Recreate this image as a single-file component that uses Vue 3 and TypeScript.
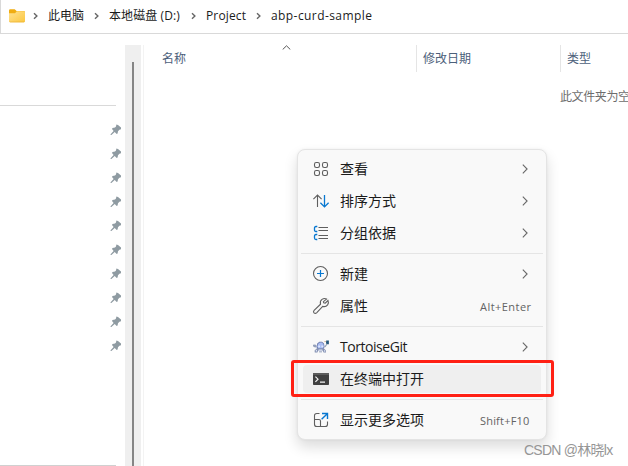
<script setup lang="ts">
interface Crumb { label: string; cls: string }
interface MenuItem { id: string; label: string; shortcut?: string; active?: boolean }

const crumbs: Crumb[] = [
  { label: '此电脑', cls: 'pc' },
  { label: '本地磁盘 (D:)', cls: 'disk' },
  { label: 'Project', cls: 'project' },
  { label: 'abp-curd-sample', cls: 'sample' },
]

const groups: MenuItem[][] = [
  [
    { id: 'view', label: '查看' },
    { id: 'sort', label: '排序方式' },
    { id: 'group', label: '分组依据' },
  ],
  [
    { id: 'new', label: '新建' },
    { id: 'props', label: '属性', shortcut: 'Alt+Enter' },
  ],
  [
    { id: 'git', label: 'TortoiseGit' },
    { id: 'terminal', label: '在终端中打开', active: true },
  ],
  [{ id: 'more', label: '显示更多选项', shortcut: 'Shift+F10' }],
]
</script>

<template>
  <div class="explorer">
    <header class="address">
      <svg class="folder" width="16" height="14" viewBox="0 0 16 14">
        <defs>
          <linearGradient id="folderFill" x1="0" y1="0" x2="1" y2="1">
            <stop offset="0" stop-color="#ffe292" />
            <stop offset="1" stop-color="#fbc740" />
          </linearGradient>
        </defs>
        <path d="M0 1.5Q0 .3 1.2.3H5.7L7.6 2H14.8Q16 2 16 3.2V9H0Z" fill="#f0ad12" />
        <path d="M0 4.2H6L7.8 2.2H14.8Q16 2.2 16 3.4V12Q16 13.2 14.8 13.2H1.2Q0 13.2 0 12Z" fill="url(#folderFill)" />
        <path d="M.5 12.6Q.8 13 1.3 13H14.7Q15.2 13 15.5 12.6" fill="none" stroke="#e9ac27" stroke-width=".6" />
      </svg>
      <template v-for="c in crumbs" :key="c.label">
        <svg class="crumb-arrow" width="5" height="8" viewBox="0 0 5 8">
          <path d="M1 1.2L3.9 4L1 6.8" fill="none" stroke="#666" stroke-width="1.4" />
        </svg>
        <span class="crumb" :class="c.cls">{{ c.label }}</span>
      </template>
    </header>

    <div class="body">
      <nav class="sidebar">
        <div class="pins">
          <svg v-for="n in 10" :key="n" class="pin" width="12" height="12" viewBox="0 0 12 12">
            <path d="M6.4.6L8 .9L11 3.6V5.2L9.4 5.8L8 7.2L7.6 9.6L6.7 9.9L4.7 8L1.4 11H.6V10.2L3.6 7L2 5L2.5 4.1L5 3.6L6 2.4Z" fill="#8f9ba2" />
          </svg>
        </div>
      </nav>
      <div class="scrollbar"><div class="thumb"></div></div>
      <main class="content">
        <div class="columns">
          <div class="column name">
            <span>名称</span>
            <svg class="sort-mark" width="9" height="5" viewBox="0 0 9 5">
              <path d="M.7 4.5L4.5.8L8.3 4.5" fill="none" stroke="#555" />
            </svg>
          </div>
          <div class="column date">修改日期</div>
          <div class="column type">类型</div>
        </div>
        <p class="empty">此文件夹为空</p>
      </main>
    </div>

    <div class="menu">
      <div v-for="(g, i) in groups" :key="i" class="group">
        <div v-for="item in g" :key="item.id" class="item" :class="{ active: item.active }">
          <svg class="icon" width="16" height="16" viewBox="0 0 16 16" fill="none" stroke="#5f5f5f" stroke-width="1.1">
            <g v-if="item.id === 'view'">
              <rect x="1.5" y="1.5" width="5" height="5" rx="1.7" />
              <rect x="9.5" y="1.5" width="5" height="5" rx="1.7" />
              <rect x="1.5" y="9.5" width="5" height="5" rx="1.7" />
              <rect x="9.5" y="9.5" width="5" height="5" rx="1.7" />
            </g>
            <g v-else-if="item.id === 'sort'">
              <path d="M4.5 14V2.3M.4 6.2L4.5 2.1L8.6 6.2" />
              <path d="M11.5 2V13.7M7.4 9.8L11.5 13.9L15.6 9.8" stroke="#0878d1" stroke-width="1.3" />
            </g>
            <g v-else-if="item.id === 'group'">
              <path d="M5.5 2.5H15M5.5 5.5H15M5.5 10.5H15M5.5 13.5H15" />
              <path d="M4.3 1.5H3Q1.5 1.5 1.5 3V5Q1.5 6.5 3 6.5H4.3M4.3 9.5H3Q1.5 9.5 1.5 11V13Q1.5 14.5 3 14.5H4.3" stroke="#0878d1" stroke-width="1.3" />
            </g>
            <g v-else-if="item.id === 'new'">
              <circle cx="7.5" cy="7.5" r="7" />
              <path d="M7.5 4V11M4 7.5H11" stroke="#0878d1" stroke-width="1.2" />
            </g>
            <g v-else-if="item.id === 'props'">
              <path d="M13.5 1.1Q11.3-.1 9 1.4Q6.7 3.1 7.5 6.2L1.1 12.3Q-.1 13.6 1 14.9Q2.3 16 3.6 14.8L9.7 8.4Q12.7 9.3 14.6 6.9Q16 4.7 15 2.5L12.2 5.2L10.7 4.9L10.4 3.6Z" />
            </g>
            <g v-else-if="item.id === 'git'" stroke="none">
              <path d="M3.6 8L4.2 4.6L6.4 2.8H9L11 4.6L11.6 8L10.4 10.2H4.4Z" fill="#6d7cab" />
              <path d="M4.4 7.4L5 5L6.8 3.6H8.8L10.4 5L10.8 7.8L9.6 9.4H5.4Z" fill="#a9bdf3" />
              <path d="M5.2 6.4H7V8.2H5.2ZM8.4 6.4H10.2V8.2H8.4Z" fill="#dfe7fb" />
              <path d="M0 5.8L2.2 5.4L3.6 6.6V8.4L1.4 8.2L0 7.2Z" fill="#94a0bb" />
              <path d="M3.6 9.4L1.6 11.4L1.8 13.4H4.4L5.2 11.6H9.6L10.6 13.6H13L12.8 11.2L11 9.4Z" fill="#8491b2" />
              <path d="M2.6 11.6L4 10.6V12.6H2.8ZM11 10.6L12.2 11.8V12.8H11.2ZM5.6 10.4H9.4V11.4H5.6Z" fill="#dce4f6" />
              <path d="M6 12.2H9V13.4H6Z" fill="#a4afc8" />
              <path d="M13.2 1.6H15.9V5.2H14.4L13 4.4Z" fill="#255779" />
              <path d="M14 5L11.8 8" stroke="#8c9aae" />
              <path d="M11.6 2H12.6V3H11.6Z" fill="#c39469" />
            </g>
            <g v-else-if="item.id === 'terminal'" stroke="none">
              <rect y="2" width="16" height="12" rx=".8" fill="#404040" />
              <path d="M0 2.8Q0 2 .8 2H15.2Q16 2 16 2.8V4H0Z" fill="#5c5c5c" />
              <path d="M2.4 5.6L5 8.2L2.4 10.8M7 11.2H12" fill="none" stroke="#f4f4f4" stroke-width="1.2" />
            </g>
            <g v-else>
              <path d="M6.5 1.5H3.8Q1.5 1.5 1.5 3.8V12.2Q1.5 14.5 3.8 14.5H12.2Q14.5 14.5 14.5 12.2V9.5M1.5 7.5H6Q7.5 7.5 7.5 9V14.5" />
              <path d="M9 1.5H14.5V7M14.3 1.7L8.6 7.2" stroke="#0878d1" stroke-width="1.4" />
            </g>
          </svg>
          <span class="label" :class="item.id">{{ item.label }}</span>
          <span v-if="item.shortcut" class="shortcut" :class="item.id">{{ item.shortcut }}</span>
          <svg v-else-if="!item.active" class="arrow" width="6" height="10" viewBox="0 0 6 10">
            <path d="M.8.6L5.1 5L.8 9.4" fill="none" stroke="#686868" stroke-width="1.1" />
          </svg>
        </div>
      </div>
    </div>
    <div class="highlight"></div>
    <div class="watermark">CSDN @林晓lx</div>
  </div>
</template>

<style>
body { margin: 0; overflow: hidden; }
</style>

<style scoped>
* { box-sizing: border-box; }
.explorer {
  position: relative;
  width: 628px;
  height: 466px;
  overflow: hidden;
  background: #fff;
  display: flex;
  flex-direction: column;
  font-family: "Open Sans", "Noto Sans CJK SC", sans-serif;
  font-size: 12px;
  color: #1b1b1b;
}
.address {
  height: 34px;
  flex: none;
  display: flex;
  align-items: center;
  padding: 0 0 2px 8px;
  border-left: 1px solid #d9d9d9;
  border-bottom: 1px solid #d9d9d9;
}
.folder { margin-right: 8px; }
.crumb-arrow { flex: none; margin-right: 10px; }
.crumb { flex: none; height: 18px; line-height: 18px; white-space: nowrap; margin-right: 10px; }
.crumb.pc { width: 36px; }
.crumb.disk { width: 72px; letter-spacing: .1px; }
.crumb.project { width: 40px; letter-spacing: .15px; }
.crumb.sample { letter-spacing: .42px; }
.body { flex: 1; display: flex; padding-top: 11px; min-height: 0; }
.sidebar {
  width: 116px;
  margin: 60px 9px 0 0;
  flex: none;
  border-top: 1px solid #d9d9d9;
  border-bottom: 1px solid #d0d0d0;
}
.pins { display: flex; flex-direction: column; align-items: flex-end; gap: 12px; padding-top: 17.5px; margin-right: -6px; }
.pin { display: block; }
.scrollbar { flex: none; width: 16px; background: #efefef; padding: 17px 0 0 7px; }
.thumb { width: 2px; height: 100%; background: #858585; }
.content { flex: 1; min-width: 0; margin-left: 2px; border-left: 1px solid #f3f3f3; }
.columns { display: flex; height: 27px; color: #4c607a; line-height: 27px; }
.column { position: relative; flex: none; border-left: 1px solid #e5e5e5; padding-left: 6px; }
.name { width: 272px; padding-left: 18px; border-left: none; }
.date { width: 144px; }
.type { width: 68px; }
.sort-mark { position: absolute; left: 138px; top: 0; }
.empty { margin: 16px 0 0 416px; line-height: 18px; letter-spacing: -.4px; color: #6d6d6d; white-space: nowrap; }
.menu {
  position: absolute;
  left: 297px;
  top: 149px;
  width: 250px;
  height: 291px;
  padding: 3px;
  border: 1px solid #e4e4e4;
  border-radius: 8px;
  background: #f9f9f9;
  box-shadow: 0 7px 14px rgba(0, 0, 0, .14), 0 0 3px rgba(0, 0, 0, .05);
}
.group { display: flow-root; }
.group + .group::before { content: ""; display: block; height: 1px; margin-top: 4px; background: #e5e5e5; }
.item {
  display: flex;
  align-items: center;
  height: 28px;
  margin: 0 2px;
  padding-left: 10px;
  border-radius: 4px;
  font-size: 14px;
}
.item + .item { margin-top: 4px; }
.item:last-child { margin-bottom: 2px; }
.item:first-child { margin-top: 2px; }
.group + .group .item:first-child { margin-top: 6px; }
.item.active { background: #efefef; }
.icon { flex: none; margin-right: 11px; overflow: visible; }
.label { line-height: 20px; white-space: nowrap; }
.label.git { letter-spacing: -.45px; }
.arrow { margin-left: auto; margin-right: 13px; }
.shortcut { margin-left: auto; margin-right: 9.5px; font-size: 11px; letter-spacing: .45px; color: #636363; white-space: nowrap; }
.shortcut.more { margin-right: 11.5px; letter-spacing: .2px; }
.highlight {
  position: absolute;
  left: 291px;
  top: 360px;
  width: 263px;
  height: 37px;
  border: 3px solid #ff2014;
  border-radius: 3px;
}
.watermark {
  position: absolute;
  left: 524px;
  top: 440px;
  line-height: 20px;
  font-family: "Liberation Sans", "Noto Sans CJK SC", sans-serif;
  font-size: 14px;
  letter-spacing: -.75px;
  color: #969696;
  white-space: nowrap;
}
</style>
